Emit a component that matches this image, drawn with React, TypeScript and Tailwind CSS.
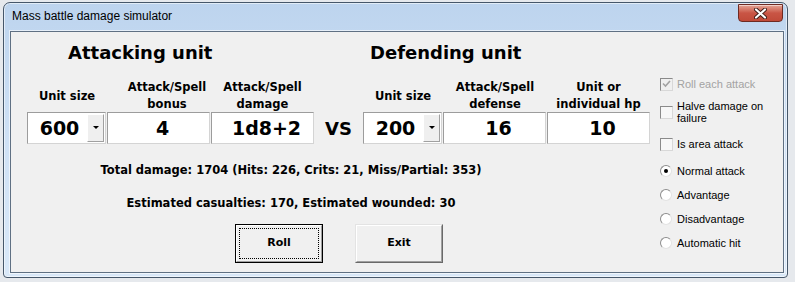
import React from 'react';

const bold = "font-['DejaVu_Sans',sans-serif] font-bold";
const plain = "font-['Liberation_Sans',Arial,sans-serif]";

const sunken =
  'border border-t-[#9c9c9c] border-l-[#9c9c9c] border-b-[#d4d4d4] border-r-[#d4d4d4] bg-white';

function ComboBox({ value }: { value: string }) {
  return (
    <div className={`w-[79px] h-[32px] flex ${sunken}`}>
      <div className={`flex-1 flex items-center justify-center pl-[4px] text-[19px] text-black ${bold}`}>
        {value}
      </div>
      <div className="w-[17px] my-[1px] mr-[1px] flex items-center justify-center bg-[#efefef] border border-t-white border-l-white border-b-[#a0a0a0] border-r-[#a0a0a0]">
        <svg width="6" height="4" viewBox="0 0 6 4">
          <path d="M0 0 H6 L3 3 Z" fill="#000" />
        </svg>
      </div>
    </div>
  );
}

function TextBox({ value }: { value: string }) {
  return (
    <div
      className={`w-[103px] h-[32px] flex items-center justify-center pl-[8px] text-[19px] text-black ${bold} ${sunken}`}
    >
      {value}
    </div>
  );
}

function Label({ lines, width, shift = 0 }: { lines: string[]; width: string; shift?: number }) {
  return (
    <div
      className={`${width} h-full flex flex-col items-center justify-center text-[11.5px] leading-[17px] text-black ${bold}`}
      style={shift ? { paddingLeft: shift } : undefined}
    >
      {lines.map((l) => (
        <span key={l}>{l}</span>
      ))}
    </div>
  );
}

function CheckBox({ checked, disabled }: { checked?: boolean; disabled?: boolean }) {
  return (
    <div
      className={`w-[13px] h-[13px] shrink-0 flex items-center justify-center border border-t-[#8a8a8a] border-l-[#8a8a8a] border-b-[#d8d8d8] border-r-[#d8d8d8] ${
        disabled ? 'bg-[#f0f0f0]' : 'bg-[#f7f7f7]'
      }`}
    >
      {checked && (
        <svg width="9" height="8" viewBox="0 0 9 8">
          <path d="M1 3.5 L3.5 6 L8 1" fill="none" stroke={disabled ? '#a3a3a3' : '#000'} strokeWidth="1.6" />
        </svg>
      )}
    </div>
  );
}

function Radio({ checked }: { checked?: boolean }) {
  return (
    <div className="w-[12px] h-[12px] shrink-0 rounded-full bg-white flex items-center justify-center border border-t-[#8d8d8d] border-l-[#8d8d8d] border-b-[#e2e2e2] border-r-[#e2e2e2]">
      {checked && <div className="w-[4px] h-[4px] rounded-full bg-black" />}
    </div>
  );
}

const radios = [
  { label: 'Normal attack', checked: true },
  { label: 'Advantage' },
  { label: 'Disadvantage' },
  { label: 'Automatic hit' },
];

export default function App() {
  return (
    <div className="w-[795px] h-[282px] bg-[#e6e9ed] pt-[2px] pl-[3px] overflow-hidden">
      {/* Window */}
      <div className="w-[785px] h-[276px] flex flex-col rounded-t-[7px] rounded-b-[4px] border border-[#46576a] bg-linear-to-b from-[#bdd4ee] via-[#cfe1f5] to-[#d9e8f8] shadow-[inset_0_0_0_1px_rgba(255,255,255,0.55)]">
        {/* Title bar */}
        <div className="h-[28px] flex items-start justify-between">
          <div className={`pl-[8px] pt-[5px] text-[12px] leading-[16px] text-black ${plain}`}>
            Mass battle damage simulator
          </div>
          <div className="mt-[1px] mr-[4px] w-[45px] h-[18px] rounded-b-[4px] border border-[#6e2a22] bg-linear-to-b from-[#e3a597] via-[#c95545] to-[#c04a39] flex items-center justify-center shadow-[inset_0_1px_0_rgba(255,255,255,0.5)]">
            <svg width="13" height="11" viewBox="0 0 13 11">
              <path d="M2 1.5 L11 9.5 M11 1.5 L2 9.5" stroke="#3b1a16" strokeWidth="4" strokeLinecap="round" />
              <path d="M2 1.5 L11 9.5 M11 1.5 L2 9.5" stroke="#fff" strokeWidth="2.2" strokeLinecap="round" />
            </svg>
          </div>
        </div>

        {/* Client area */}
        <div className="ml-[6px] w-[774px] h-[242px] border border-[#5f7083] bg-[#f0f0f0] flex shadow-[0_0_0_1px_rgba(255,255,255,0.6)]">
          {/* Main column */}
          <div className="w-[639px] flex flex-col">
            {/* Headings */}
            <div className={`mt-[10px] h-[22px] flex pl-[57px] text-[18px] leading-[22px] text-black ${bold}`}>
              <div className="w-[302px]">Attacking unit</div>
              <div>Defending unit</div>
            </div>

            {/* Labels */}
            <div className="mt-[16px] h-[32px] flex pl-[16px]">
              <Label lines={['Unit size']} width="w-[80px]" />
              <Label lines={['Attack/Spell', 'bonus']} width="w-[104px]" shift={16} />
              <Label lines={['Attack/Spell', 'damage']} width="w-[103px]" />
              <div className="w-[49px]" />
              <Label lines={['Unit size']} width="w-[80px]" />
              <Label lines={['Attack/Spell', 'defense']} width="w-[104px]" />
              <Label lines={['Unit or', 'individual hp']} width="w-[103px]" />
            </div>

            {/* Inputs */}
            <div className="h-[32px] flex gap-[1px] pl-[16px]">
              <ComboBox value="600" />
              <TextBox value="4" />
              <TextBox value="1d8+2" />
              <div className={`w-[47px] flex items-center justify-center text-[18px] text-black ${bold}`}>VS</div>
              <ComboBox value="200" />
              <TextBox value="16" />
              <TextBox value="10" />
            </div>

            {/* Results */}
            <div className={`mt-[18px] w-[560px] text-center text-[11.5px] leading-[16px] text-black ${bold}`}>
              Total damage: 1704 (Hits: 226, Crits: 21, Miss/Partial: 353)
            </div>
            <div className={`mt-[17px] w-[560px] text-center text-[11.5px] leading-[16px] text-black ${bold}`}>
              Estimated casualties: 170, Estimated wounded: 30
            </div>

            {/* Buttons */}
            <div className={`mt-[13px] ml-[224px] flex gap-[32px] text-[11px] text-black ${bold}`}>
              <button className="w-[88px] h-[39px] border border-black bg-[#f0f0f0] p-0">
                <div className="w-full h-full border border-t-white border-l-white border-b-[#a0a0a0] border-r-[#a0a0a0] p-[2px]">
                  <div className="w-full h-full border border-dotted border-black flex items-center justify-center">
                    Roll
                  </div>
                </div>
              </button>
              <button className="w-[88px] h-[39px] bg-[#f0f0f0] border border-t-[#e3e3e3] border-l-[#e3e3e3] border-b-[#696969] border-r-[#696969] p-0">
                <div className="w-full h-full border border-t-white border-l-white border-b-[#a0a0a0] border-r-[#a0a0a0] flex items-center justify-center">
                  Exit
                </div>
              </button>
            </div>
          </div>

          {/* Options column */}
          <div className={`pl-[10px] flex flex-col text-[11px] leading-[12px] ${plain}`}>
            <div className="mt-[45px] h-[14px] flex items-center gap-[4px]">
              <CheckBox checked disabled />
              <span className="text-[#a3a3a3]">Roll each attack</span>
            </div>
            <div className="mt-[8px] h-[26px] flex items-center gap-[4px] text-black">
              <CheckBox />
              <span>
                Halve damage on
                <br />
                failure
              </span>
            </div>
            <div className="mt-[12px] h-[14px] flex items-center gap-[4px] text-black">
              <CheckBox />
              <span>Is area attack</span>
            </div>
            {radios.map((r, i) => (
              <div
                key={r.label}
                className={`${i === 0 ? 'mt-[13px]' : 'mt-[10px]'} h-[14px] flex items-center gap-[5px] text-black`}
              >
                <Radio checked={r.checked} />
                <span>{r.label}</span>
              </div>
            ))}
          </div>
        </div>
      </div>
    </div>
  );
}
